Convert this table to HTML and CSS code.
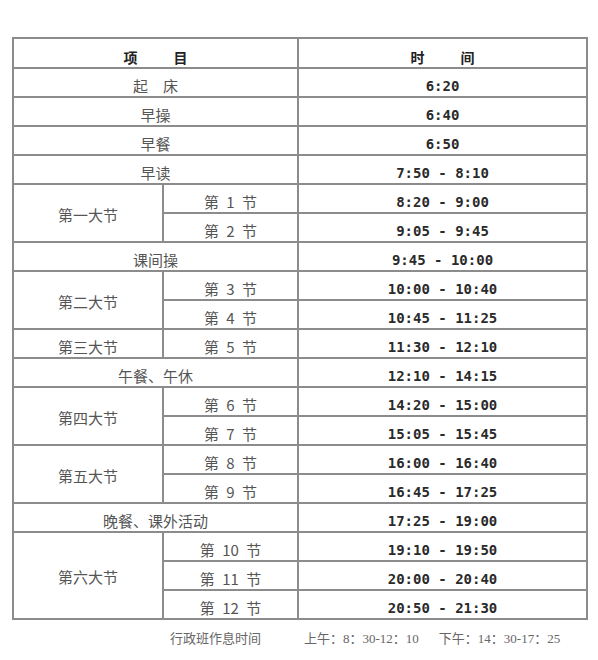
FILE: index.html
```html
<!DOCTYPE html>
<html lang="zh">
<head>
<meta charset="utf-8">
<link rel="stylesheet" href="styles.css">
</head>
<body>
<table class="sched">
  <colgroup><col class="c1"><col class="c2"><col class="c3"></colgroup>
  <tr class="head"><th colspan="2"><span class="sp">项</span>目</th><th><span class="sp">时</span>间</th></tr>
  <tr><td colspan="2" class="item">起<span class="gap"></span>床</td><td class="time">6:20</td></tr>
  <tr><td colspan="2" class="item">早操</td><td class="time">6:40</td></tr>
  <tr><td colspan="2" class="item">早餐</td><td class="time">6:50</td></tr>
  <tr><td colspan="2" class="item">早读</td><td class="time">7:50 - 8:10</td></tr>
  <tr><td rowspan="2" class="big">第一大节</td><td class="item ws">第 1 节</td><td class="time">8:20 - 9:00</td></tr>
  <tr><td class="item ws">第 2 节</td><td class="time">9:05 - 9:45</td></tr>
  <tr><td colspan="2" class="item">课间操</td><td class="time">9:45 - 10:00</td></tr>
  <tr><td rowspan="2" class="big">第二大节</td><td class="item ws">第 3 节</td><td class="time">10:00 - 10:40</td></tr>
  <tr><td class="item ws">第 4 节</td><td class="time">10:45 - 11:25</td></tr>
  <tr><td class="item">第三大节</td><td class="item ws">第 5 节</td><td class="time">11:30 - 12:10</td></tr>
  <tr><td colspan="2" class="item">午餐、午休</td><td class="time">12:10 - 14:15</td></tr>
  <tr><td rowspan="2" class="big">第四大节</td><td class="item ws">第 6 节</td><td class="time">14:20 - 15:00</td></tr>
  <tr><td class="item ws">第 7 节</td><td class="time">15:05 - 15:45</td></tr>
  <tr><td rowspan="2" class="big">第五大节</td><td class="item ws">第 8 节</td><td class="time">16:00 - 16:40</td></tr>
  <tr><td class="item ws">第 9 节</td><td class="time">16:45 - 17:25</td></tr>
  <tr><td colspan="2" class="item">晚餐、课外活动</td><td class="time">17:25 - 19:00</td></tr>
  <tr><td rowspan="3" class="big">第六大节</td><td class="item ws">第 10 节</td><td class="time">19:10 - 19:50</td></tr>
  <tr><td class="item ws">第 11 节</td><td class="time">20:00 - 20:40</td></tr>
  <tr><td class="item ws">第 12 节</td><td class="time">20:50 - 21:30</td></tr>
</table>
<div class="foot">
  <span class="f1">行政班作息时间</span>
  <span class="f2">上午：8：30-12：10</span>
  <span class="f3">下午：14：30-17：25</span>
</div>
</body>
</html>
```
FILE: styles.css
```css
html, body {
  margin: 0;
  padding: 0;
  background: #ffffff;
}
body {
  font-family: "Noto Sans CJK SC", sans-serif;
}
.sched {
  border-collapse: collapse;
  table-layout: fixed;
  width: 574px;
  margin: 37px 0 0 12px;
}
.c1 { width: 150px; }
.c2 { width: 135px; }
.c3 { width: 289px; }
.sched th, .sched td {
  border: 2px solid #8c8c8c;
  padding: 0 0 1px 0;
  text-align: center;
  vertical-align: bottom;
  height: 29px;
  line-height: 18px;
  box-sizing: border-box;
}
.sched tr.head th {
  height: 30px;
  font-family: "Noto Sans CJK SC", sans-serif;
  font-weight: 700;
  font-size: 14px;
  color: #222;
}
.sp { margin-right: 36px; }
.gap { display: inline-block; width: 15px; }
.item {
  font-size: 15px;
  color: #555;
  font-weight: 400;
}
.ws { word-spacing: 4px; }
.big {
  font-size: 15px;
  color: #555;
  vertical-align: middle !important;
  padding-top: 4px !important;
}
.time {
  font-family: "DejaVu Sans Mono", monospace;
  font-weight: 700;
  font-size: 14px;
  color: #2a2a2a;
}
.foot {
  display: flex;
  margin: 11px 0 0 170px;
  font-family: "Liberation Serif", "Noto Sans CJK SC", serif;
  font-size: 13px;
  color: #666;
  line-height: 16px;
}
.f2 { margin-left: 43px; }
.f3 { margin-left: 20px; }
```
